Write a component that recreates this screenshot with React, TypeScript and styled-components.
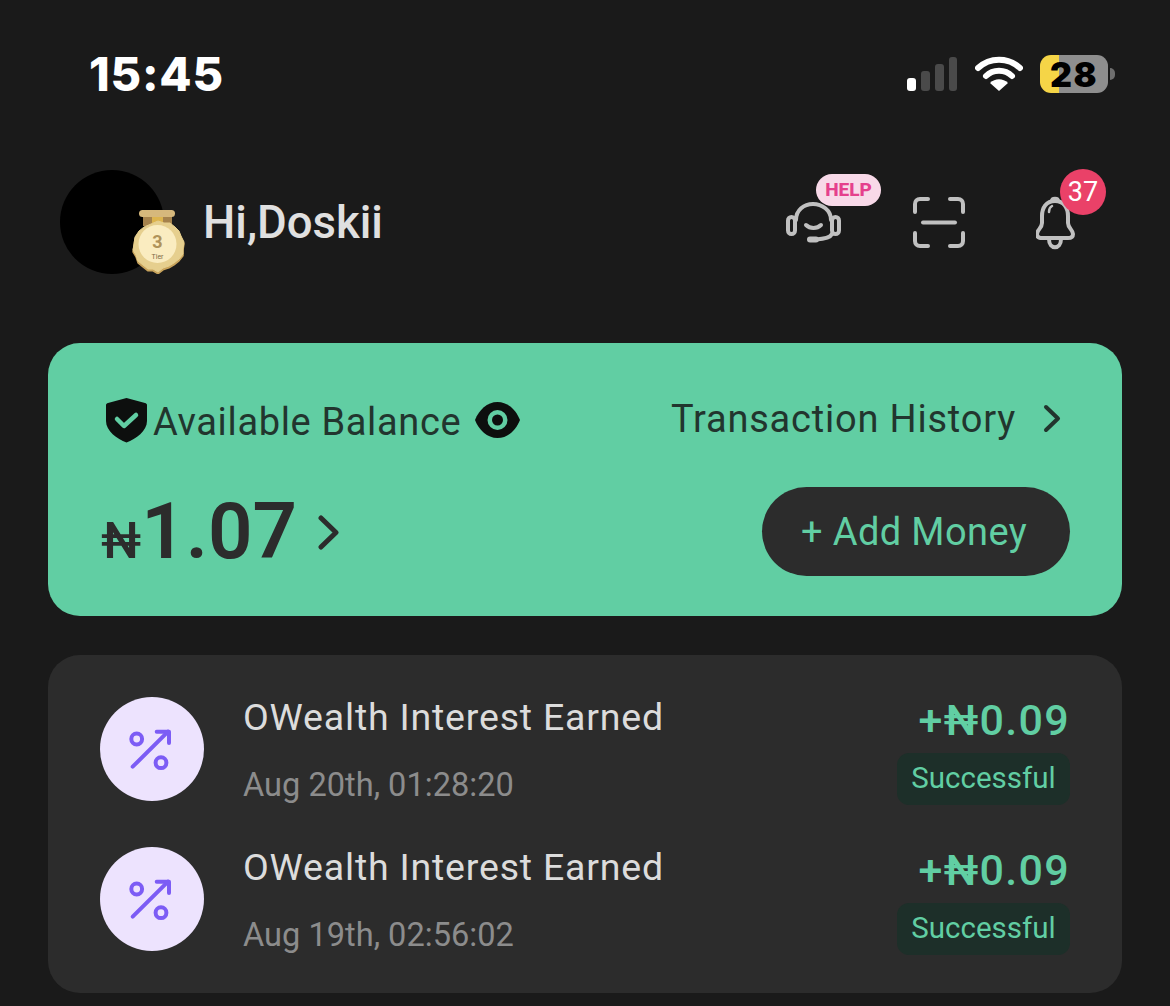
import React from "react";
import styled, { createGlobalStyle } from "styled-components";

const GlobalStyle = createGlobalStyle`
  html, body {
    margin: 0;
    padding: 0;
    background: #1a1a1a;
  }
  * {
    box-sizing: border-box;
  }
`;

const Page = styled.div`
  width: 1170px;
  height: 1006px;
  overflow: hidden;
  background: #1a1a1a;
  padding: 50px 48px 0;
  font-family: Roboto, "Liberation Sans", sans-serif;
`;

const StatusBar = styled.div`
  display: flex;
  align-items: center;
  height: 48px;
  padding: 0 7px 0 41px;
`;

const Clock = styled.div`
  flex: 1;
  font-family: Inter, "Liberation Sans", sans-serif;
  font-weight: 800;
  font-size: 47px;
  letter-spacing: 0.8px;
  line-height: 48px;
  color: #fff;
`;

const StatusIcons = styled.div`
  display: flex;
  align-items: center;
  gap: 17px;
`;

const Battery = styled.div`
  position: relative;
  display: flex;
  align-items: center;
  justify-content: center;
  width: 68px;
  height: 38px;
  margin-right: 7px;
  border-radius: 11px;
  background: linear-gradient(to right, #f5d547 0 28%, #8e8e8e 28% 100%);
  font-family: Inter, "Liberation Sans", sans-serif;
  font-weight: 900;
  font-size: 34px;
  letter-spacing: 1.5px;
  color: #000;

  &::after {
    content: "";
    position: absolute;
    right: -7px;
    top: 13px;
    width: 5px;
    height: 12px;
    border-radius: 0 6px 6px 0;
    background: #6e6e6e;
  }
`;

const Header = styled.header`
  display: flex;
  align-items: center;
  justify-content: space-between;
  margin-top: 72px;
  height: 104px;
  padding: 0 46px 0 12px;
`;

const Profile = styled.div`
  display: flex;
  align-items: center;
  gap: 39px;
`;

const Avatar = styled.div`
  position: relative;
  width: 104px;
  height: 104px;
  border-radius: 50%;
  background: #000;
`;

const MedalIcon = styled.svg`
  position: absolute;
  left: 72px;
  top: 40px;
  width: 54px;
  height: 64px;
`;

const Greeting = styled.div`
  font-size: 45.5px;
  font-weight: 500;
  color: #e0e0e0;
`;

const Actions = styled.div`
  display: flex;
  align-items: center;
  gap: 70px;
  padding-top: 2px;
`;

const ActionIcon = styled.div`
  position: relative;
  display: flex;
`;

const HelpBadge = styled.span`
  position: absolute;
  left: 30px;
  top: -28px;
  width: 65px;
  height: 32px;
  border-radius: 16px;
  background: #f8d9e8;
  color: #e5408c;
  font-size: 19px;
  font-weight: 800;
  line-height: 32px;
  text-align: center;
`;

const CountBadge = styled.span`
  position: absolute;
  left: 24px;
  top: -26px;
  width: 46px;
  height: 46px;
  border-radius: 50%;
  background: #ea4168;
  color: #fff;
  font-size: 27px;
  line-height: 46px;
  text-align: center;
`;

const BalanceCard = styled.section`
  margin-top: 69px;
  height: 273px;
  border-radius: 32px;
  background: #61cea3;
  padding: 55px 52px 0 53px;
`;

const CardTop = styled.div`
  display: flex;
  align-items: center;
  justify-content: space-between;
  height: 44px;
  padding-left: 5px;
`;

const BalanceLabel = styled.div`
  display: flex;
  align-items: center;
  font-size: 38px;
  letter-spacing: 0.65px;
  color: #22352e;
`;

const LabelText = styled.span`
  margin: 0 14px 0 6px;
  padding-top: 4px;
`;

const HistoryLink = styled.div`
  display: flex;
  align-items: center;
  gap: 27px;
  margin-top: -3px;
  padding-right: 9px;
  font-size: 38px;
  letter-spacing: 0.8px;
  color: #22352e;
`;

const CardBottom = styled.div`
  display: flex;
  align-items: center;
  justify-content: space-between;
  height: 89px;
  margin-top: 45px;
`;

const Amount = styled.div`
  display: flex;
  align-items: baseline;
  padding-top: 10px;
  color: #2c2c2c;
  font-weight: 600;
  font-size: 78px;
  line-height: 89px;
`;

const Currency = styled.span`
  font-size: 50px;
  font-weight: 500;
`;

const AmountChevron = styled.svg`
  width: 21px;
  height: 35px;
  margin: 0 0 9px 21px;
  align-self: center;
`;

const AddMoney = styled.div`
  width: 308px;
  height: 89px;
  border-radius: 45px;
  background: #2c2c2c;
  color: #61cea3;
  font-size: 38px;
  letter-spacing: 0.4px;
  line-height: 90px;
  text-align: center;
  padding-right: 4px;
`;

const TransactionList = styled.section`
  display: flex;
  flex-direction: column;
  gap: 42px;
  margin-top: 39px;
  height: 338px;
  border-radius: 32px;
  background: #2c2c2c;
  padding: 42px 52px 0;
`;

const Row = styled.div`
  display: flex;
  height: 108px;
`;

const RoundIcon = styled.div`
  display: flex;
  align-items: center;
  justify-content: center;
  flex: none;
  width: 104px;
  height: 104px;
  border-radius: 50%;
  background: #ede3fe;
`;

const RowText = styled.div`
  flex: 1;
  padding-left: 39px;
`;

const RowTitle = styled.div`
  font-size: 37.5px;
  letter-spacing: 0.8px;
  line-height: 40px;
  color: #dcdcdc;
`;

const RowDate = styled.div`
  margin-top: 28px;
  font-size: 32.6px;
  line-height: 40px;
  color: #8c8c8c;
`;

const RowStatus = styled.div`
  display: flex;
  flex-direction: column;
  align-items: flex-end;
`;

const RowAmount = styled.div`
  font-size: 43px;
  font-weight: 500;
  letter-spacing: 1.3px;
  line-height: 46px;
  color: #61cea3;
`;

const StatusChip = styled.div`
  width: 173px;
  height: 52px;
  margin-top: 10px;
  border-radius: 12px;
  background: #1d2f29;
  color: #61cea3;
  font-size: 29.5px;
  line-height: 50px;
  text-align: center;
`;

const SignalIcon = () => (
  <svg width="52" height="36" viewBox="0 0 52 36">
    <rect x="1" y="22" width="9" height="13" rx="3" fill="#fff" />
    <rect x="15" y="15" width="9" height="20" rx="3" fill="#4a4a4a" />
    <rect x="29" y="8" width="9" height="27" rx="3" fill="#4a4a4a" />
    <rect x="43" y="1" width="8" height="34" rx="3" fill="#4a4a4a" />
  </svg>
);

const WifiIcon = () => (
  <svg width="48" height="36" viewBox="0 0 48 36" fill="none">
    <path d="M3 12C15 1 33 1 45 12" stroke="#fff" strokeWidth="6" strokeLinecap="round" />
    <path d="M11 20C18 13 30 13 37 20" stroke="#fff" strokeWidth="6" strokeLinecap="round" />
    <path d="M24 35L15 27C20 22 28 22 33 27Z" fill="#fff" />
  </svg>
);

const HeadsetIcon = () => (
  <svg width="56" height="42" viewBox="0 0 56 42" fill="none" stroke="#c0c0c0" strokeWidth="4" strokeLinecap="round">
    <rect x="2" y="15" width="7" height="17" rx="3.5" />
    <rect x="46" y="15" width="7" height="17" rx="3.5" />
    <path d="M10 18C10 8 18 2 27 2C36 2 45 8 45 18" />
    <path d="M20 23C24 27 31 27 35 23" />
    <path d="M46 32C44 36 38 37 30 37.5" />
    <path d="M24 37.5H30" strokeWidth="6" />
  </svg>
);

const ScanIcon = () => (
  <svg width="54" height="52" viewBox="0 0 54 52" fill="none" stroke="#c0c0c0" strokeWidth="4" strokeLinecap="round">
    <path d="M16 2H8C5 2 3 4 3 7V15" />
    <path d="M38 2H46C49 2 51 4 51 7V15" />
    <path d="M16 49H8C5 49 3 47 3 44V36" />
    <path d="M38 49H46C49 49 51 47 51 44V36" />
    <path d="M11 25.5H43" />
  </svg>
);

const BellIcon = () => (
  <svg width="40" height="56" viewBox="1 0 40 56" fill="none" stroke="#c0c0c0" strokeWidth="4" strokeLinecap="round" strokeLinejoin="round">
    <path d="M20 6C11 6 7 13 7 21V28C7 33 2 35 2 39C2 42 4 43 7 43H33C36 43 38 42 38 39C38 35 33 33 33 28V21C33 13 29 6 20 6Z" />
    <path d="M17 6C17 3 23 3 23 6" />
    <path d="M14 44C14 55 26 55 26 44" />
    <path d="M14 17C14 14 15 12 17 11" strokeWidth="2.5" />
  </svg>
);

const scallop =
  "M26 12L32 14L38 14L43 18L47 22L49 27L52 33L51 39L51 45L47 50L42 54L37 57L31 59L26 63L21 60L16 60L11 56L6 52L4 46L1 41L2 35L3 28L7 22L12 18L19 15Z";

const Medal = () => (
  <MedalIcon viewBox="0 0 54 64">
    <rect x="7" y="0" width="36" height="7" rx="3.5" fill="#d6b87c" />
    <rect x="11" y="7" width="29" height="9" fill="#a5824c" />
    <rect x="20" y="7" width="11" height="6" fill="#dcb44f" />
    <path d={scallop} fill="#c9a45c" stroke="#c9a45c" strokeWidth="1.5" strokeLinejoin="round" transform="translate(0 0.8)" />
    <path d={scallop} fill="#e6cf8e" stroke="#e6cf8e" strokeWidth="1" strokeLinejoin="round" transform="translate(0 -1)" />
    <circle cx="25.5" cy="34" r="19" fill="#faecc0" />
    <text x="25.5" y="38" textAnchor="middle" fontFamily="Roboto, sans-serif" fontWeight="700" fontSize="18" fill="#b0935a">
      3
    </text>
    <text x="25.5" y="49" textAnchor="middle" fontFamily="Roboto, sans-serif" fontSize="7" fill="#7d6b45">
      Tier
    </text>
  </MedalIcon>
);

const ShieldIcon = () => (
  <svg width="41" height="46" viewBox="0 0 41 46">
    <path d="M20.5 1L39 6C40 6 41 7 41 8V24C41 34 30 42 20.5 45.5C11 42 0 34 0 24V8C0 7 1 6 2 6Z" fill="#0d0f0e" />
    <path d="M11 22L18 29L30 18" fill="none" stroke="#61cea3" strokeWidth="4.5" strokeLinecap="round" strokeLinejoin="round" />
  </svg>
);

const EyeIcon = () => (
  <svg width="45" height="36" viewBox="0 0 45 36">
    <path d="M22.5 0C33 0 41 8 45 18C41 28 33 36 22.5 36C12 36 4 28 0 18C4 8 12 0 22.5 0Z" fill="#0d0f0e" />
    <circle cx="22.5" cy="18" r="10" fill="#61cea3" />
    <circle cx="22.5" cy="18" r="5.5" fill="#0d0f0e" />
  </svg>
);

const ChevronIcon = () => (
  <svg width="18" height="29" viewBox="0 0 18 29" fill="none" stroke="#22352e" strokeWidth="4" strokeLinecap="round" strokeLinejoin="round">
    <path d="M3 3L15 14.5L3 26" />
  </svg>
);

const InterestIcon = () => (
  <svg width="48" height="48" viewBox="0 0 48 48" fill="none" stroke="#7c5cf5" strokeWidth="4" strokeLinecap="round" strokeLinejoin="round">
    <circle cx="8.7" cy="14" r="5.4" />
    <circle cx="33" cy="37.7" r="5.4" />
    <path d="M4.7 41.7L40 6.7" />
    <path d="M28.7 6.7H41V18" />
  </svg>
);

const transactions = [
  { title: "OWealth Interest Earned", date: "Aug 20th, 01:28:20", amount: "+₦0.09" },
  { title: "OWealth Interest Earned", date: "Aug 19th, 02:56:02", amount: "+₦0.09" },
];

export default function App() {
  return (
    <>
      <GlobalStyle />
      <Page>
        <StatusBar>
          <Clock>15:45</Clock>
          <StatusIcons>
            <SignalIcon />
            <WifiIcon />
            <Battery>28</Battery>
          </StatusIcons>
        </StatusBar>

        <Header>
          <Profile>
            <Avatar>
              <Medal />
            </Avatar>
            <Greeting>Hi,Doskii</Greeting>
          </Profile>
          <Actions>
            <ActionIcon>
              <HeadsetIcon />
              <HelpBadge>HELP</HelpBadge>
            </ActionIcon>
            <ActionIcon>
              <ScanIcon />
            </ActionIcon>
            <ActionIcon>
              <BellIcon />
              <CountBadge>37</CountBadge>
            </ActionIcon>
          </Actions>
        </Header>

        <BalanceCard>
          <CardTop>
            <BalanceLabel>
              <ShieldIcon />
              <LabelText>Available Balance</LabelText>
              <EyeIcon />
            </BalanceLabel>
            <HistoryLink>
              Transaction History
              <ChevronIcon />
            </HistoryLink>
          </CardTop>
          <CardBottom>
            <Amount>
              <Currency>₦</Currency>1.07
              <AmountChevron viewBox="0 0 21 35" fill="none" stroke="#2c2c2c" strokeWidth="5" strokeLinecap="round" strokeLinejoin="round">
                <path d="M3 3L18 17.5L3 32" />
              </AmountChevron>
            </Amount>
            <AddMoney>+ Add Money</AddMoney>
          </CardBottom>
        </BalanceCard>

        <TransactionList>
          {transactions.map((tx) => (
            <Row key={tx.date}>
              <RoundIcon>
                <InterestIcon />
              </RoundIcon>
              <RowText>
                <RowTitle>{tx.title}</RowTitle>
                <RowDate>{tx.date}</RowDate>
              </RowText>
              <RowStatus>
                <RowAmount>{tx.amount}</RowAmount>
                <StatusChip>Successful</StatusChip>
              </RowStatus>
            </Row>
          ))}
        </TransactionList>
      </Page>
    </>
  );
}
